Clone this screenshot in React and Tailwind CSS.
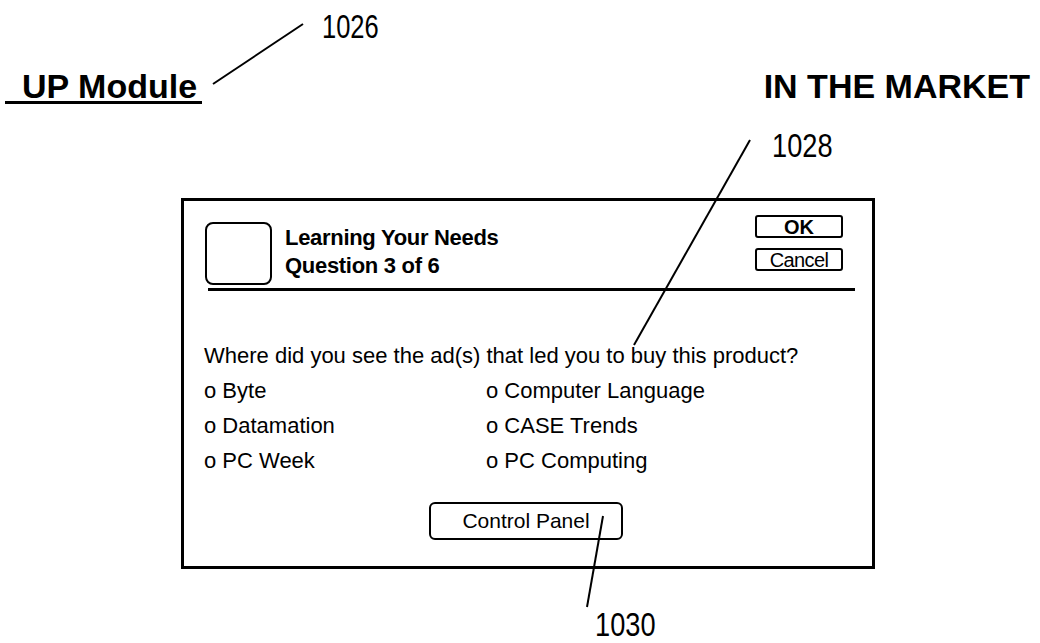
export default function App() {
  const opts = [
    ["o Byte", "o Computer Language"],
    ["o Datamation", "o CASE Trends"],
    ["o PC Week", "o PC Computing"],
  ];
  return (
    <div className="relative w-[1040px] h-[643px] overflow-hidden bg-white text-black font-['Liberation_Sans',Arial,sans-serif]">
      {/* header */}
      <div className="flex items-start justify-between pt-[71px] pl-[5px] pr-[10px]">
        <div className="border-b-[3px] border-black pl-[17px] pr-[5px] text-[34px] font-bold leading-[30px]">
          UP Module
        </div>
        <div className="text-[34px] font-bold leading-[30px]">IN THE MARKET</div>
      </div>

      {/* dialog */}
      <div className="ml-[181px] mt-[94px] flex h-[371px] w-[694px] flex-col border-[3px] border-black">
        <div className="flex items-start pl-[21px] pr-[29px] pt-[21px]">
          <div className="h-[63px] w-[67px] rounded-[8px] border-2 border-black" />
          <div className="ml-[13px] mt-[2px] text-[22px] font-bold leading-[28px] tracking-[-0.3px]">
            <div>Learning Your Needs</div>
            <div>Question 3 of 6</div>
          </div>
          <div className="ml-auto mt-[-7px] flex flex-col gap-[10px]">
            <div className="flex h-[23px] w-[88px] items-center justify-center rounded-[3px] border-2 border-black text-[20px] font-bold leading-none">
              OK
            </div>
            <div className="flex h-[23px] w-[88px] items-center justify-center rounded-[3px] border-2 border-black text-[20px] leading-none tracking-[-0.6px]">
              Cancel
            </div>
          </div>
        </div>
        <div className="ml-[24px] mr-[17px] mt-[3px] border-t-[3px] border-black" />
        <div className="pl-[20px] pt-[47px] text-[22px] leading-[35px]">
          <div>Where did you see the ad(s) that led you to buy this product?</div>
          {opts.map(([a, b]) => (
            <div key={a} className="grid grid-cols-[282px_1fr]">
              <div>{a}</div>
              <div>{b}</div>
            </div>
          ))}
        </div>
        <div className="ml-[245px] mt-[24px] flex h-[38px] w-[194px] items-center justify-center rounded-[6px] border-2 border-black text-[21px]">
          Control Panel
        </div>
      </div>

      {/* annotation leader lines */}
      <svg className="pointer-events-none absolute inset-0" width="1040" height="643">
        <line x1="213" y1="84" x2="303" y2="24" stroke="black" strokeWidth="2" />
        <line x1="750" y1="140" x2="634" y2="345" stroke="black" strokeWidth="2" />
        <line x1="603" y1="516" x2="587" y2="607" stroke="black" strokeWidth="2" />
      </svg>
      <div className="absolute left-[322px] top-[9px] origin-left scale-x-[0.75] text-[34px] leading-none">1026</div>
      <div className="absolute left-[772px] top-[128px] origin-left scale-x-[0.8] text-[34px] leading-none">1028</div>
      <div className="absolute left-[595px] top-[607px] origin-left scale-x-[0.8] text-[34px] leading-none">1030</div>
    </div>
  );
}
